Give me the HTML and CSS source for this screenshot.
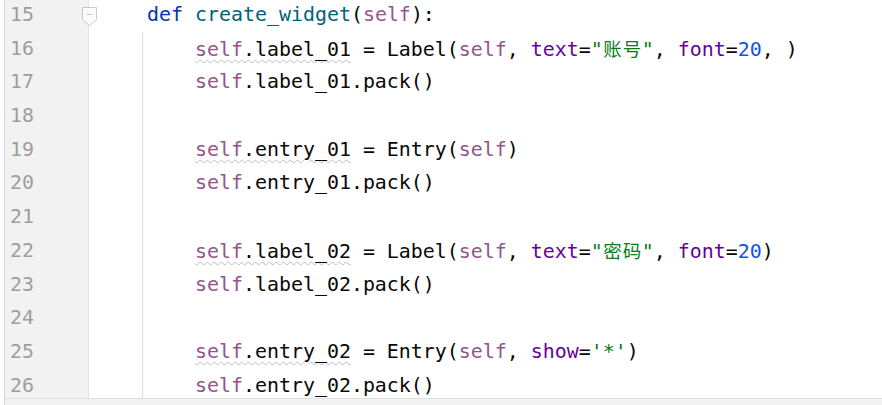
FILE: index.html
```html
<!DOCTYPE html>
<html>
<head>
<meta charset="utf-8">
<link rel="stylesheet" href="styles.css">
</head>
<body>
<div class="window">
  <div class="editor">
    <div class="gutter">
      <div class="ln">15<svg class="fold" width="15" height="19" viewBox="0 0 15 19"><path d="M0.5 0.5H14.5V12.5L7.5 18.5L0.5 12.5Z" fill="#fbfbfb" stroke="#c9c9c9"/><path d="M4.5 7.5H10.5" stroke="#c9c9c9"/></svg></div>
      <div class="ln">16</div>
      <div class="ln">17</div>
      <div class="ln">18</div>
      <div class="ln">19</div>
      <div class="ln">20</div>
      <div class="ln">21</div>
      <div class="ln">22</div>
      <div class="ln">23</div>
      <div class="ln">24</div>
      <div class="ln">25</div>
      <div class="ln">26</div>
    </div>
    <div class="code">
      <div class="line">    <span class="kw">def</span> <span class="fn">create_widget</span>(<span class="sf">self</span>):</div>
      <div class="block">
        <div class="line">        <span class="warn"><span class="sf">self</span>.label_01</span> = Label(<span class="sf">self</span>, <span class="arg">text</span>=<span class="str">"<span class="cjk">账</span><span class="cjk">号</span>"</span>, <span class="arg">font</span>=<span class="num">20</span>, )</div>
        <div class="line">        <span class="sf">self</span>.label_01.pack()</div>
        <div class="line"> </div>
        <div class="line">        <span class="warn"><span class="sf">self</span>.entry_01</span> = Entry(<span class="sf">self</span>)</div>
        <div class="line">        <span class="sf">self</span>.entry_01.pack()</div>
        <div class="line"> </div>
        <div class="line">        <span class="warn"><span class="sf">self</span>.label_02</span> = Label(<span class="sf">self</span>, <span class="arg">text</span>=<span class="str">"<span class="cjk">密</span><span class="cjk">码</span>"</span>, <span class="arg">font</span>=<span class="num">20</span>)</div>
        <div class="line">        <span class="sf">self</span>.label_02.pack()</div>
        <div class="line"> </div>
        <div class="line">        <span class="warn"><span class="sf">self</span>.entry_02</span> = Entry(<span class="sf">self</span>, <span class="arg">show</span>=<span class="str">'*'</span>)</div>
        <div class="line">        <span class="sf">self</span>.entry_02.pack()</div>
      </div>
    </div>
  </div>
  <div class="status"></div>
</div>
</body>
</html>
```
FILE: styles.css
```css
html, body {
  margin: 0;
  padding: 0;
  background: #ffffff;
  width: 882px;
  height: 405px;
  overflow: hidden;
}

.window {
  margin-left: 4px;
  border-left: 1px solid #d6d6d6;
  height: 405px;
  display: flex;
  flex-direction: column;
  font-family: "DejaVu Sans Mono", "Liberation Mono", monospace;
  font-size: 19.93px;
  color: #080808;
  text-autospace: no-autospace;
}

.editor {
  display: flex;
  height: 398px;
  overflow: hidden;
  flex: none;
}

.gutter {
  width: 83px;
  flex: none;
  margin-top: -2px;
  background: #f2f2f2;
  border-right: 1px solid #e3e3e3;
  position: relative;
  z-index: 1;
}

.ln {
  height: 33.7px;
  line-height: 33.7px;
  padding-left: 5px;
  color: #9e9e9e;
  position: relative;
}

.fold {
  position: absolute;
  left: 77px;
  top: 9px;
  display: block;
}

.code {
  flex: 1;
  margin-top: -2px;
  padding-left: 10px;
}

.line {
  height: 33.7px;
  line-height: 33.7px;
  white-space: pre;
}

.block {
  border-left: 1px solid #dedede;
  margin-left: 43px;
  padding-left: 0;
}

.block .line {
  margin-left: -44px;
}

.kw { color: #0033b3; }
.fn { color: #00627a; }
.sf { color: #94558d; }
.arg { color: #660099; }
.str { color: #067d17; }
.num { color: #1750eb; }

.cjk {
  display: inline-block;
  width: 19.5px;
  text-align: center;
  font-family: "Noto Sans CJK SC", sans-serif;
  font-size: 18.5px;
}

.warn {
  text-decoration: underline wavy #bdbdbd;
  text-decoration-thickness: 1px;
  text-underline-offset: 3px;
}

.status {
  flex: 1;
  background: #f2f2f2;
  border-top: 1px solid #e0e0e0;
}
```
